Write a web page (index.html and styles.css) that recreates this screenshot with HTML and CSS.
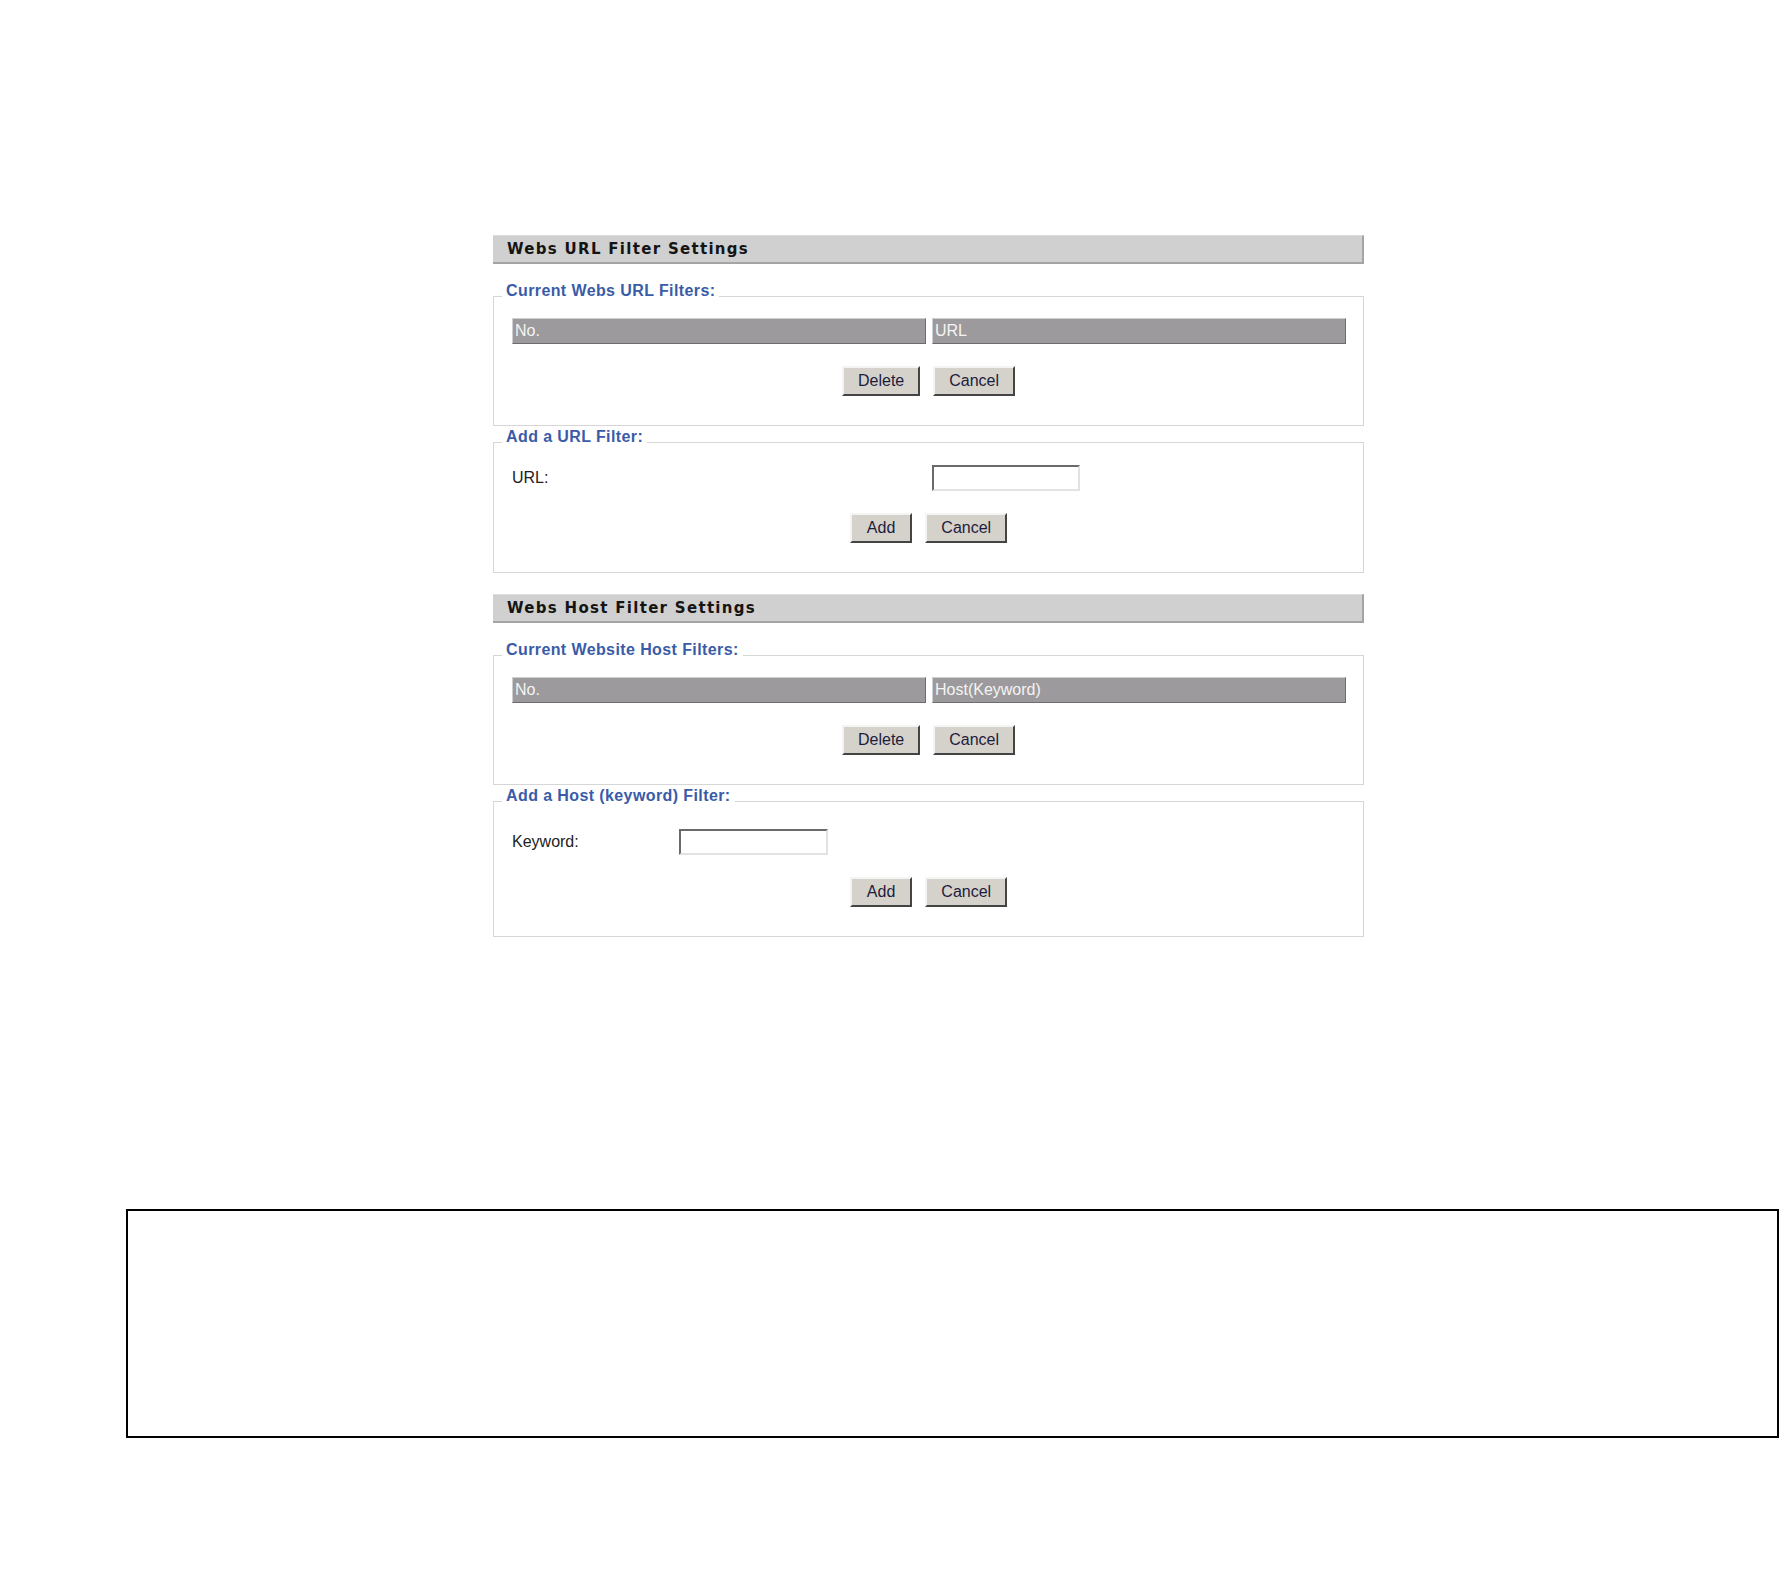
FILE: index.html
```html
<!DOCTYPE html>
<html lang="en">
<head>
    <meta charset="UTF-8">
    <title>Webs Filter Settings</title>
    <link rel="stylesheet" href="styles.css">
</head>
<body>
    <div class="page">
        <!-- URL filter -->
        <div class="title">Webs URL Filter Settings</div>

        <fieldset class="box">
            <legend>Current Webs URL Filters:</legend>
            <table class="list">
                <tr>
                    <td>No.</td>
                    <td>URL</td>
                </tr>
            </table>
            <div class="buttons">
                <button type="button">Delete</button>
                <button type="button">Cancel</button>
            </div>
        </fieldset>

        <fieldset class="box">
            <legend>Add a URL Filter:</legend>
            <div class="field url-field">
                <label for="url">URL:</label>
                <input type="text" id="url" name="url">
            </div>
            <div class="buttons">
                <button type="button" class="btn-add">Add</button>
                <button type="button">Cancel</button>
            </div>
        </fieldset>

        <!-- Host filter -->
        <div class="title second">Webs Host Filter Settings</div>

        <fieldset class="box">
            <legend>Current Website Host Filters:</legend>
            <table class="list">
                <tr>
                    <td>No.</td>
                    <td>Host(Keyword)</td>
                </tr>
            </table>
            <div class="buttons">
                <button type="button">Delete</button>
                <button type="button">Cancel</button>
            </div>
        </fieldset>

        <fieldset class="box">
            <legend>Add a Host (keyword) Filter:</legend>
            <div class="field keyword-field">
                <label for="keyword">Keyword:</label>
                <input type="text" id="keyword" name="keyword">
            </div>
            <div class="buttons">
                <button type="button" class="btn-add">Add</button>
                <button type="button">Cancel</button>
            </div>
        </fieldset>
    </div>

    <div class="bottom-frame"></div>
</body>
</html>
```

FILE: styles.css
```css
* {
    box-sizing: border-box;
}

body {
    margin: 0;
    background-color: #FFFFFF;
    font-family: "Liberation Sans", Arial, sans-serif;
    font-size: 16px;
    color: #222222;
}

.page {
    width: 871px;
    margin: 235px 0 0 493px;
}

/* barra de titulo gris */
.title {
    height: 29px;
    line-height: 26px;
    padding-left: 14px;
    background-color: #d0d0d0;
    border-top: 1px solid #dcdcdc;
    border-right: 2px solid #a4a4a4;
    border-bottom: 2px solid #a4a4a4;
    font-family: "DejaVu Sans", Verdana, sans-serif;
    font-weight: bold;
    font-size: 15px;
    letter-spacing: 1.3px;
    color: #141414;
}

.title.second {
    margin-top: 21px;
}

.box {
    margin: 1px 0 0 0;
    padding: 7px 0 29px 0;
    border: 1px solid #d6d6d6;
}

.title + .box {
    margin-top: 17px;
}

.box legend {
    margin-left: 8px;
    padding: 0 4px 10px 4px;
    line-height: 20px;
    font-weight: bold;
    letter-spacing: 0.4px;
    color: #3a5ca8;
}

.list {
    width: 846px;
    margin-left: 12px;
    border-spacing: 6px 0;
}

.list td {
    width: 50%;
    height: 26px;
    padding: 0 2px;
    background-color: #9c9a9c;
    border: 1px solid;
    border-color: #cfcfcf #6c6c6c #6c6c6c #cfcfcf;
    color: #f4f4f4;
}

.buttons {
    display: flex;
    justify-content: center;
    gap: 13px;
    margin-top: 22px;
}

button {
    height: 30px;
    padding: 0 14px;
    background-color: #d5d2cc;
    border: 2px solid;
    border-color: #f4f4f4 #444444 #444444 #f4f4f4;
    font-family: "Liberation Sans", Arial, sans-serif;
    font-size: 16px;
    color: #1c1c3c;
}

.btn-add {
    padding: 0 15px;
}

.field {
    display: grid;
    align-items: center;
    margin-left: 18px;
}

.url-field {
    grid-template-columns: 420px 148px;
    margin-top: 1px;
}

.keyword-field {
    grid-template-columns: 167px 149px;
    margin-top: 6px;
}

.field label {
    color: #222222;
}

.field input {
    height: 26px;
    border: 2px solid;
    border-color: #6a6a6a #e2e2e2 #e2e2e2 #6a6a6a;
    background-color: #FFFFFF;
}

.bottom-frame {
    width: 1653px;
    height: 229px;
    margin: 272px 0 0 126px;
    border: 2px solid #000000;
}
```
